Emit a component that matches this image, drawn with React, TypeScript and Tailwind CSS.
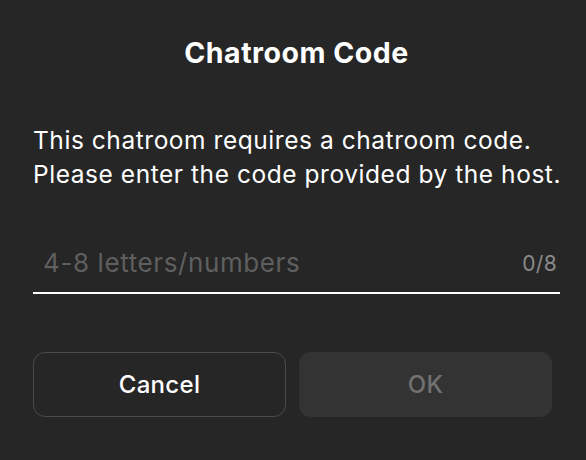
export default function App() {
  return (
    <div
      className="w-[586px] h-[460px] bg-[#262626] text-white overflow-hidden"
      style={{ fontFamily: "Inter, 'Noto Sans', sans-serif" }}
    >
      <div className="pl-[33px] pr-[26px] pt-[35px]">
        <h1 className="text-center text-[28.5px] leading-[36px] font-bold tracking-[0.5px]">Chatroom Code</h1>

        <p className="mt-[52px] whitespace-nowrap text-[24.5px] leading-[34px] tracking-[0.55px] text-white">
          This chatroom requires a chatroom code.
          <br />
          Please enter the code provided by the host.
        </p>

        <div className="mt-[54px] flex items-end justify-between border-b-2 border-white pb-[12px] pl-[10px] pr-[3px]">
          <span className="text-[26px] leading-[35px] tracking-[0.6px] text-[#5f5f5f]">4-8 letters/numbers</span>
          <span className="text-[21px] leading-[32px] tracking-[0.3px] text-[#8a8a8a]">0/8</span>
        </div>

        <div className="mt-[58px] grid w-[519px] grid-cols-2 gap-[13px]">
          <button className="h-[65px] rounded-[12px] border-[1.5px] border-[#4b4b4b] text-[24px] font-medium tracking-[0.3px] text-white">
            Cancel
          </button>
          <button className="h-[65px] rounded-[12px] bg-[#333333] text-[24px] font-medium tracking-[0.3px] text-[#707070]">
            OK
          </button>
        </div>
      </div>
    </div>
  );
}
